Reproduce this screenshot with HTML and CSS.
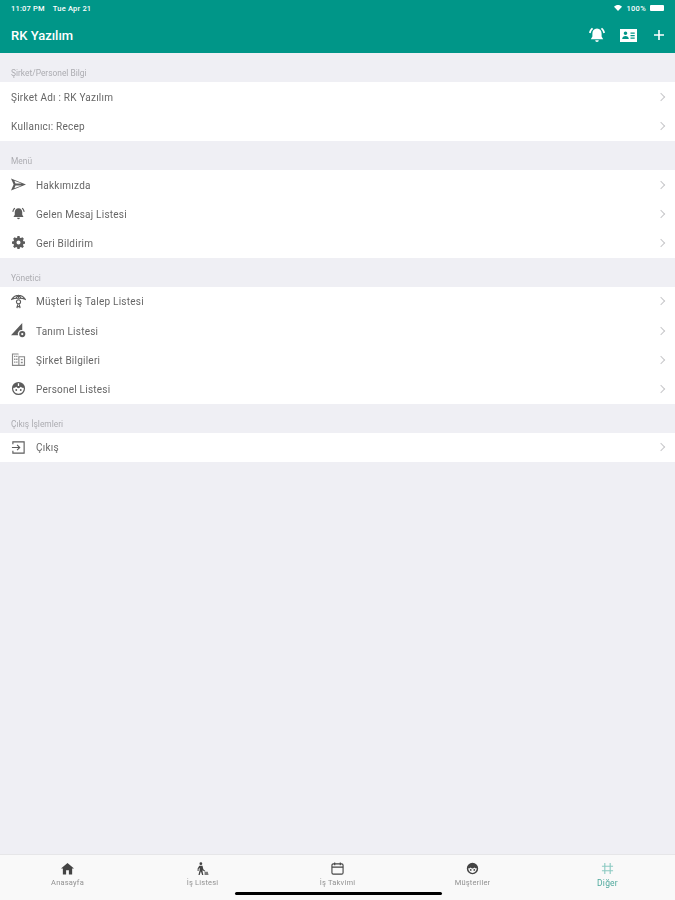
FILE: index.html
```html
<!DOCTYPE html>
<html lang="en">
<head>
    <meta charset="UTF-8">
    <meta name="viewport" content="width=device-width, initial-scale=1.0">
    <title>RK Yazılım</title>
    <link rel="stylesheet" href="styles.css">
</head>
<body>
    <div class="app">
        <header class="topbar">
            <div class="status">
                <span class="status-time">11:07 PM</span>
                <span class="status-date">Tue Apr 21</span>
                <span class="status-right">
                    <svg class="wifi" viewBox="0 0 12 9"><path d="M6 9 0 2.600C3.400-.8 8.600-.8 12 2.600z"/></svg>
                    <span class="status-pct">100%</span>
                    <span class="battery"></span>
                </span>
            </div>
            <div class="navbar">
                <span class="navbar-title">RK Yazılım</span>
                <span class="navbar-icons">
                    <svg class="nav-bell" viewBox="0 0 16 16"><path d="M8 1.500c3 0 4.600 2.200 4.600 5v3l1.600 2.700H1.800l1.600-2.700v-3C3.400 3.700 5 1.500 8 1.500zM6.200 13.200h3.600A1.800 1.800 0 0 1 6.200 13.200zM3 .8l1.200 1.300C2.900 3.100 2 4.500 1.700 6.200L0 5.800C.4 3.800 1.400 2.100 3 .8zM13 .8c1.600 1.300 2.600 3 3 5l-1.700.4C14 4.500 13.100 3.100 11.800 2.100z"/></svg>
                    <svg class="nav-card" viewBox="0 0 17 13"><path fill-rule="evenodd" d="M0 0h17v13H0zM5.500 2.500a1.800 1.800 0 1 0 0 3.600 1.800 1.800 0 0 0 0-3.600zM2.200 10h6.600C8.800 8 7.300 7 5.500 7S2.200 8 2.200 10zM10.500 3.500v1.200h4.200V3.500zM10.500 6v1.200h4.200V6zM10.500 8.500v1.200h4.200V8.500z"/></svg>
                    <svg class="nav-plus" viewBox="0 0 10 10"><path d="M4.200 0h1.600v4.200H10v1.600H5.800V10H4.200V5.800H0V4.200h4.200z"/></svg>
                </span>
            </div>
        </header>

        <main class="content">
            <div class="section-title">Şirket/Personel Bilgi</div>
            <ul class="list">
                <li class="row row-plain"><span class="row-text">Şirket Adı : RK Yazılım</span><span class="chev"></span></li>
                <li class="row row-plain"><span class="row-text">Kullanıcı: Recep</span><span class="chev"></span></li>
            </ul>

            <div class="section-title">Menü</div>
            <ul class="list">
                <li class="row">
                    <svg class="row-icon" viewBox="0 0 16 14"><path d="M0 .5 16 7 0 13.500 2.800 7zM3.600 3 4.800 6h6.600zM4.800 8 3.600 11l7.800-3z" fill-rule="evenodd"/></svg>
                    <span class="row-text">Hakkımızda</span><span class="chev"></span>
                </li>
                <li class="row">
                    <svg class="row-icon row-icon-small" viewBox="0 0 16 16"><path d="M8 1.500c3 0 4.600 2.200 4.600 5v3l1.600 2.700H1.800l1.600-2.700v-3C3.400 3.700 5 1.500 8 1.500zM6.200 13.200h3.600A1.800 1.800 0 0 1 6.200 13.200zM3 .8l1 1.100C2.900 2.900 2 4.300 1.700 6L.4 5.700C.8 3.700 1.600 2.100 3 .8zM13 .8c1.400 1.300 2.200 2.900 2.600 4.900L14.300 6C14 4.300 13.100 2.900 12 1.900z"/></svg>
                    <span class="row-text">Gelen Mesaj Listesi</span><span class="chev"></span>
                </li>
                <li class="row">
                    <svg class="row-icon row-icon-small" viewBox="0 0 16 16"><path fill-rule="evenodd" d="M6.700 1h2.600l.4 2 1.300.6 1.800-1.100 1.800 1.800-1.100 1.800.6 1.300 2 .4v2.600l-2 .4-.6 1.300 1.100 1.800-1.800 1.800-1.800-1.100-1.300.6-.4 2H6.700l-.4-2-1.300-.6-1.800 1.100-1.800-1.800 1.100-1.800-.6-1.300-2-.4V7.800l2-.4.6-1.300-1.100-1.800 1.800-1.800L5 3.600l1.300-.6zM8 6.500a2.500 2.500 0 1 0 0 5 2.500 2.500 0 0 0 0-5z" transform="translate(0 -1)"/></svg>
                    <span class="row-text">Geri Bildirim</span><span class="chev"></span>
                </li>
            </ul>

            <div class="section-title">Yönetici</div>
            <ul class="list">
                <li class="row">
                    <svg class="row-icon row-icon-line" viewBox="0 0 16 16"><path d="M1 5.500C3 2.500 5.500 1.500 8 1.500s5 1 7 4C13 4.500 11.500 4.500 8 4.500s-5 0-7 1zM5 4.700 8 1.500l3 3.200M8 1.500v3M6.300 15 7.200 11M9.700 15 8.800 11M6 13.500h4"/><circle cx="8" cy="8.300" r="2.200"/></svg>
                    <span class="row-text">Müşteri İş Talep Listesi</span><span class="chev"></span>
                </li>
                <li class="row">
                    <svg class="row-icon" viewBox="0 0 16 16"><path d="M12 0v7.600a4 4 0 0 0-4.500 5.400H0z"/><path fill-rule="evenodd" d="M12 8.500a3.300 3.300 0 1 1 0 6.600 3.300 3.300 0 0 1 0-6.600zM12 10.600a1.200 1.200 0 1 0 0 2.400 1.200 1.200 0 0 0 0-2.400z"/></svg>
                    <span class="row-text">Tanım Listesi</span><span class="chev"></span>
                </li>
                <li class="row">
                    <svg class="row-icon row-icon-soft" viewBox="0 0 16 16"><path fill-rule="evenodd" d="M1 1.500h7v3h7V15H1zM2.200 2.700v11h5.600v-11zM9 5.700v8h4.800v-8zM3.300 4h1.400v1.400H3.300zM5.500 4h1.400v1.400H5.500zM3.300 7h1.400v1.400H3.300zM5.500 7h1.400v1.400H5.500zM3.300 10h1.400v1.400H3.300zM5.500 10h1.400v1.400H5.500zM10.500 7.500h2v1.400h-2zM10.500 10.500h2v1.400h-2z"/></svg>
                    <span class="row-text">Şirket Bilgileri</span><span class="chev"></span>
                </li>
                <li class="row">
                    <svg class="row-icon" viewBox="0 0 16 16"><path fill-rule="evenodd" d="M8 1a7 7 0 1 1 0 14A7 7 0 0 1 8 1zM2.400 7.300c-.4 3.400 2.200 6.400 5.600 6.400s6-3 5.600-6.400c-1.300.2-2.500-.2-3.300-1.100-.5 1-1.300 1.500-2.300 1.500S6.200 7.200 5.700 6.200C4.900 7.100 3.700 7.500 2.400 7.300zM7.300 2.500v2.800h1.400V2.500z"/><circle cx="5.600" cy="9.600" r="1"/><circle cx="10.400" cy="9.600" r="1"/></svg>
                    <span class="row-text">Personel Listesi</span><span class="chev"></span>
                </li>
            </ul>

            <div class="section-title">Çıkış İşlemleri</div>
            <ul class="list">
                <li class="row">
                    <svg class="row-icon row-icon-line" viewBox="0 0 16 16"><path d="M2 4.500V2h12v12H2v-2.500M1 8h8M6.500 5.200 9.300 8l-2.800 2.800"/></svg>
                    <span class="row-text">Çıkış</span><span class="chev"></span>
                </li>
            </ul>
        </main>

        <nav class="tabbar">
            <div class="tab">
                <svg class="tab-icon" viewBox="0 0 14 13"><path d="M7 .5 14 6.500H12V13H8.500V8.500h-3V13H2V6.500H0z"/></svg>
                <span>Anasayfa</span>
            </div>
            <div class="tab">
                <svg class="tab-icon" viewBox="0 0 16 16"><circle cx="6" cy="2" r="1.700"/><path d="M4 4.500h4l1 4.500 2.500 2-.7.700L8 10v1l1 5H7.500L6 11.500 4.500 16H3l1.500-6V7L3.200 8.500V11H2V8z"/><path d="M10.500 12h4l1 4h-5z" opacity=".7"/></svg>
                <span>İş Listesi</span>
            </div>
            <div class="tab">
                <svg class="tab-icon tab-icon-line" viewBox="0 0 14 14"><rect x="1" y="2" width="12" height="11" rx="1.500"/><path d="M1 5.500h12M4 .5v3M10 .5v3"/></svg>
                <span>İş Takvimi</span>
            </div>
            <div class="tab">
                <svg class="tab-icon" viewBox="0 0 16 16"><path fill-rule="evenodd" d="M8 1a7 7 0 1 1 0 14A7 7 0 0 1 8 1zM2.800 7.800C2.700 11 5 13.500 8 13.500s5.300-2.500 5.200-5.700c-1.200.1-2.300-.3-3-1.100-.5.8-1.300 1.200-2.200 1.200s-1.700-.4-2.200-1.200c-.7.8-1.800 1.200-3 1.100z"/><circle cx="5.800" cy="9.800" r="1.100"/><circle cx="10.200" cy="9.800" r="1.100"/></svg>
                <span>Müşteriler</span>
            </div>
            <div class="tab tab-active">
                <svg class="tab-icon" viewBox="0 0 14 14"><path d="M3.500 1h1.200v3h4.600V1h1.200v3H13v1.200h-2.500v3.600H13V10h-2.500v3H9.300v-3H4.700v3H3.500v-3H1V8.800h2.500V5.200H1V4h2.500zM4.700 5.200v3.600h4.600V5.200z"/></svg>
                <span>Diğer</span>
            </div>
            <div class="home-indicator"></div>
        </nav>
    </div>
</body>
</html>
```

FILE: styles.css
```css
* {
    box-sizing: border-box;
}

html, body {
    margin: 0;
    height: 100%;
}

body {
    font-family: Roboto, "Liberation Sans", sans-serif;
    background: #efeff4;
    overflow: hidden;
}

.app {
    display: flex;
    flex-direction: column;
    height: 900px;
    filter: blur(0.6px);
}

/* Top bar */
.topbar {
    height: 53px;
    background: #009688;
    color: #fff;
    flex-shrink: 0;
}

.status {
    display: flex;
    align-items: center;
    height: 15px;
    padding: 1px 11px 0 11px;
    font-size: 7.500px;
    font-weight: 500;
    letter-spacing: 0.2px;
}

.status-date {
    margin-left: 8px;
}

.status-right {
    display: flex;
    align-items: center;
    gap: 3px;
    margin-left: auto;
}

.status-pct {
    margin: 0 1px 0 1px;
    letter-spacing: 0.3px;
}

.wifi {
    width: 8px;
    height: 6px;
    fill: #fff;
}

.battery {
    width: 14px;
    height: 6px;
    background: #fff;
    border-radius: 1px;
}

.navbar {
    display: flex;
    align-items: center;
    justify-content: space-between;
    height: 38px;
    padding: 7px 11px 5px 11px;
}

.navbar-title {
    font-size: 13px;
    font-weight: 500;
}

.navbar-icons {
    display: flex;
    align-items: center;
}

.navbar-icons svg {
    fill: #fff;
}

.nav-bell {
    width: 16px;
    height: 16px;
}

.nav-card {
    width: 17px;
    height: 13px;
    margin-left: 15px;
}

.nav-plus {
    width: 10px;
    height: 10px;
    margin-left: 17px;
}

/* Lists */
.content {
    flex: 1;
}

.section-title {
    height: 29.300px;
    padding: 15px 0 0 11px;
    font-size: 8.400px;
    line-height: 11px;
    color: #acacb1;
}

.list {
    margin: 0;
    padding: 0;
    list-style: none;
    background: #fff;
}

.row {
    display: flex;
    align-items: center;
    height: 29.200px;
    padding: 0 8px 0 11px;
    font-size: 10px;
    color: #666;
    letter-spacing: 0.23px;
}

.row-icon {
    width: 15px;
    height: 15px;
    margin-right: 10px;
    fill: #5c5c5c;
    flex-shrink: 0;
}

.row-icon-small {
    width: 13px;
    height: 13px;
    margin-left: 1px;
    margin-right: 11px;
}

.row-icon-line {
    fill: none;
    stroke: #5c5c5c;
    stroke-width: 1.200;
}

.row-icon-soft {
    fill: #888;
}

.row-text {
    flex: 1;
    padding-top: 1px;
}

.chev {
    width: 6px;
    height: 6px;
    margin-right: 3px;
    border-top: 1.500px solid #c8c8cb;
    border-right: 1.500px solid #c8c8cb;
    transform: rotate(45deg);
}

/* Bottom tabs */
.tabbar {
    position: relative;
    display: flex;
    height: 46px;
    flex-shrink: 0;
    background: #f9f9f9;
    border-top: 1px solid #e6e6e8;
}

.tab {
    flex: 1;
    display: flex;
    flex-direction: column;
    align-items: center;
    padding-top: 7px;
    font-size: 7.500px;
    color: #919191;
    letter-spacing: 0.2px;
}

.tab-icon {
    width: 13px;
    height: 13px;
    margin-bottom: 3px;
    fill: #444;
}

.tab-icon-line {
    fill: none;
    stroke: #444;
    stroke-width: 1.200;
}

.tab-active {
    color: #4fa99d;
    font-size: 8.500px;
}

.tab-active .tab-icon {
    fill: #8ccac2;
}

.home-indicator {
    position: absolute;
    left: 235px;
    bottom: 5px;
    width: 207px;
    height: 3px;
    border-radius: 2px;
    background: #000;
}
```
